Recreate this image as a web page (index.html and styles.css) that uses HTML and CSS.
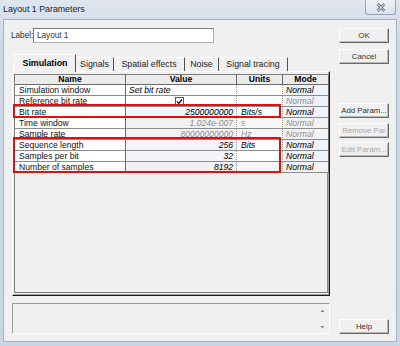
FILE: index.html
```html
<!DOCTYPE html>
<html>
<head>
<title>Layout 1 Parameters</title>
<link rel="stylesheet" href="styles.css">
</head>
<body>

<div class="window">

<!-- TITLE BAR -->
<div class="titleBar">
<span class="titleText">Layout 1 Parameters</span>
<span class="closeBox">
<svg width="10" height="9" viewBox="0 0 10 9">
<path d="M1.5 1 L8.5 8 M8.5 1 L1.5 8" stroke="#6a7484" stroke-width="2.6" fill="none"/>
<path d="M1.5 1 L8.5 8 M8.5 1 L1.5 8" stroke="#f4f6f9" stroke-width="1" fill="none"/>
</svg>
</span>
</div>

<div class="client">

<!-- LEFT SIDE -->
<div class="mainCol">

<div class="labelRow">
<span class="labelText">Label:</span>
<div class="textBox">Layout 1</div>
</div>

<ul class="tabStrip">
<li class="tab tabActive tabSimulation">Simulation</li>
<li class="tab tabSignals">Signals</li>
<li class="tab tabSpatial">Spatial effects</li>
<li class="tab tabNoise">Noise</li>
<li class="tab tabTracing">Signal tracing</li>
</ul>

<div class="tabPage">
<div class="grid">
<table class="params">
<tr class="head">
<th class="colName">Name</th>
<th class="colValue">Value</th>
<th class="colUnits">Units</th>
<th class="colMode">Mode</th>
</tr>
<tr>
<td class="name">Simulation window</td>
<td class="value textValue">Set bit rate</td>
<td class="units"></td>
<td class="mode">Normal</td>
</tr>
<tr class="plain">
<td class="name">Reference bit rate</td>
<td class="value checkValue"><span class="checkBox">
<svg width="7" height="7" viewBox="0 0 7 7"><path d="M1 3.5 L2.8 5.3 L6 1.5" stroke="#000" stroke-width="1.2" fill="none"/></svg>
</span></td>
<td class="units"></td>
<td class="mode dim">Normal</td>
</tr>
<tr class="tint">
<td class="name">Bit rate</td>
<td class="value">2500000000</td>
<td class="units">Bits/s</td>
<td class="mode">Normal</td>
</tr>
<tr class="grey">
<td class="name">Time window</td>
<td class="value dim">1.024e-007</td>
<td class="units dim">s</td>
<td class="mode dim">Normal</td>
</tr>
<tr class="grey">
<td class="name">Sample rate</td>
<td class="value dim">80000000000</td>
<td class="units dim">Hz</td>
<td class="mode dim">Normal</td>
</tr>
<tr class="tint">
<td class="name">Sequence length</td>
<td class="value">256</td>
<td class="units">Bits</td>
<td class="mode">Normal</td>
</tr>
<tr class="tint">
<td class="name">Samples per bit</td>
<td class="value">32</td>
<td class="units"></td>
<td class="mode">Normal</td>
</tr>
<tr class="grey">
<td class="name">Number of samples</td>
<td class="value">8192</td>
<td class="units"></td>
<td class="mode">Normal</td>
</tr>
</table>
</div> <!-- grid -->

<!-- red highlight boxes drawn over the table -->
<div class="mark markBitRate"></div>
<div class="mark markSamples"></div>
</div> <!-- tabPage -->

<div class="messageBox">
<span class="scrollArrows">
<svg width="5" height="22" viewBox="0 0 5 22">
<path d="M0.5 4 L2.5 1.5 L4.5 4 Z" fill="#8a8a8a"/>
<path d="M0.5 18 L2.5 20.5 L4.5 18 Z" fill="#8a8a8a"/>
</svg>
</span>
</div>

</div> <!-- mainCol -->

<!-- BUTTONS -->
<div class="sideCol">
<a href=# class="button btnOk">OK</a>
<a href=# class="button btnCancel">Cancel</a>
<a href=# class="button btnAdd">Add Param...</a>
<a href=# class="button btnRemove disabled">Remove Par</a>
<a href=# class="button btnEdit disabled">Edit Param...</a>
<a href=# class="button btnHelp">Help</a>
</div>

</div> <!-- client -->
</div> <!-- window -->

</body>
</html>
```

FILE: styles.css
```css
body
{
margin:0;
background:#cbd8e7;
font-family:"Liberation Sans", Arial, sans-serif;
font-size:8.6px;
color:#000;
}

div.window
{
width:400px;
height:346px;
box-sizing:border-box;
padding:0 3px 4px 3px;
background:linear-gradient(#dfe6ee, #cfdae7 40px, #c9d6e5);
display:flex;
flex-direction:column;
}

/* title bar */
div.titleBar
{
height:19px;
display:flex;
align-items:flex-start;
flex-shrink:0;
}
span.titleText
{
margin-top:4px;
font-size:8.8px;
color:#1e1e1e;
}
span.closeBox
{
margin-left:auto;
margin-right:1px;
width:31px;
height:15px;
box-sizing:border-box;
border:1px solid #98a5b6;
border-top:none;
border-radius:0 0 3px 3px;
background:linear-gradient(#eef2f6, #dbe3ec);
display:flex;
align-items:center;
justify-content:center;
}

/* client area */
div.client
{
flex:1;
display:flex;
background:#f0f0f0;
border:1px solid #a4b1c1;
padding:8px 7px 7px 8px;
}

div.mainCol
{
width:318px;
display:flex;
flex-direction:column;
}

div.labelRow
{
height:15px;
display:flex;
align-items:center;
}
span.labelText
{
margin-left:-1px;
width:22px;
color:#333;
font-size:8.2px;
}
div.textBox
{
width:181px;
height:15px;
box-sizing:border-box;
background:#fff;
border:1px solid #b0b0b0;
border-top-color:#7a7a7a;
border-left-color:#7a7a7a;
padding-left:3px;
line-height:13px;
color:#333;
font-size:8.2px;
}

/* tabs */
ul.tabStrip
{
margin:11px 0 0 0;
padding:0 0 0 2px;
list-style-type:none;
height:17px;
display:flex;
align-items:flex-end;
}
li.tab
{
height:14px;
box-sizing:border-box;
line-height:13px;
text-align:center;
border-top:1px solid #fff;
border-right:1px solid #505050;
font-size:8.8px;
color:#222;
}
li.tabActive
{
height:18px;
margin-bottom:-1px;
border-left:1px solid #fff;
background:#f0f0f0;
position:relative;
z-index:2;
font-weight:bold;
line-height:17px;
color:#000;
}
li.tabSimulation { width:62px; }
li.tabSignals { width:38px; }
li.tabSpatial { width:71px; }
li.tabNoise { width:34px; }
li.tabTracing { width:69px; }

/* tab page */
div.tabPage
{
height:225px;
box-sizing:border-box;
border-left:1px solid #fff;
border-top:1px solid #fff;
border-right:1px solid #1a1a1a;
border-bottom:1px solid #1a1a1a;
box-shadow:inset -1px -1px 0 #a0a0a0;
position:relative;
display:flex;
flex-direction:column;
}

div.grid
{
flex:1;
margin:2px 1px 2px 1px;
border-left:1px solid #7a7a7a;
border-top:1px solid #7a7a7a;
border-right:1px solid #8a8a8a;
border-bottom:1px solid #7a7a7a;
background:#f0f0f0;
}

table.params
{
border-collapse:separate;
border-spacing:0;
table-layout:fixed;
width:310px;
}
table.params th
{
height:9px;
padding:0;
line-height:9px;
font-weight:bold;
text-align:center;
background:#ebebeb;
border-right:1px solid #6a6a6a;
border-bottom:1px solid #6a6a6a;
}
th.colName { width:110px; }
th.colValue { width:110px; }
th.colUnits { width:45px; }
th.colMode { width:45px; }

table.params td
{
padding:0;
line-height:10px;
height:10px;
white-space:nowrap;
overflow:hidden;
background:#fff;
border-bottom:1px solid #8c8c8c;
}
td.name
{
padding-left:4px !important;
border-right:1px solid #6a6a6a;
color:#111;
}
td.value
{
padding-right:3px !important;
text-align:right;
font-style:italic;
border-right:1px dotted #9a9a9a;
}
td.textValue
{
text-align:left;
padding-left:3px !important;
}
td.checkValue
{
text-align:center;
}
td.units
{
padding-left:4px !important;
font-style:italic;
border-right:1px dotted #9a9a9a;
}
td.mode
{
padding-left:3px !important;
font-style:italic;
border-right:1px solid #6a6a6a;
background:#eef2fb !important;
}
td.dim
{
color:#8f8f8f;
}
tr.tint td.value { background:#f2f4fa; }
tr.grey td.value { background:#f1f1f1; }
tr.grey td.units { background:#f6f6f6; }
tr.grey td.mode { background:#f2f2f4 !important; }

span.checkBox
{
display:inline-block;
width:7px;
height:7px;
border:1px solid #555;
background:#fff;
vertical-align:-1px;
line-height:0;
}

/* red highlight boxes */
div.mark
{
position:absolute;
left:0;
width:268px;
box-sizing:border-box;
border:2px solid #e01010;
}
div.markBitRate
{
top:32px;
height:14px;
}
div.markSamples
{
top:65px;
height:36px;
}

/* message box */
div.messageBox
{
margin-top:7px;
height:31px;
box-sizing:border-box;
border:1px solid #fff;
border-top-color:#9a9a9a;
border-left-color:#9a9a9a;
display:flex;
justify-content:flex-end;
align-items:center;
}
span.scrollArrows
{
margin-right:4px;
line-height:0;
}

/* buttons */
div.sideCol
{
margin-left:9px;
width:50px;
display:flex;
flex-direction:column;
}
a.button
{
display:block;
height:15px;
box-sizing:border-box;
background:#f0f0f0;
border:1px solid #fff;
border-right-color:#6a6a6a;
border-bottom-color:#6a6a6a;
box-shadow:inset -1px -1px 0 #b8b8b8;
text-align:center;
line-height:13px;
color:#333;
text-decoration:none;
font-size:7.8px;
white-space:nowrap;
overflow:hidden;
}
a.disabled
{
color:#a8a8a8;
}
a.btnCancel { margin-top:6px; }
a.btnAdd { margin-top:39px; }
a.btnRemove { margin-top:5px; }
a.btnEdit { margin-top:4px; }
a.btnHelp { margin-top:auto; }
```
